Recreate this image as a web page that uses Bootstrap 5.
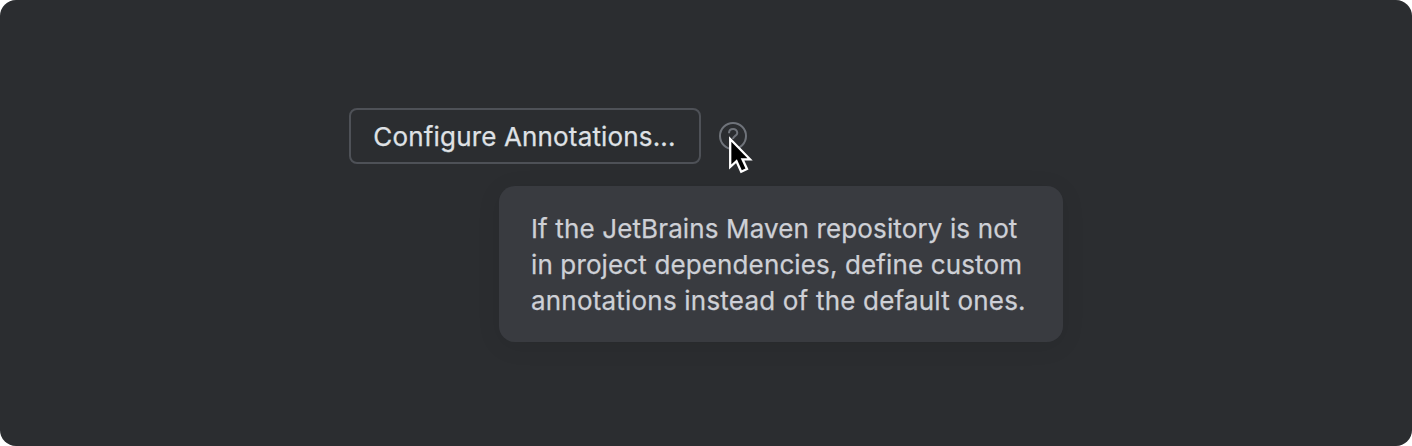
<!DOCTYPE html>
<html lang="en">
<head>
<meta charset="utf-8">
<meta name="viewport" content="width=device-width, initial-scale=1">
<title>Configure Annotations</title>
<link href="https://cdn.jsdelivr.net/npm/bootstrap@5.3.0/dist/css/bootstrap.min.css" rel="stylesheet">
<style>
body{background:#fff;font-family:Inter,sans-serif;font-size:26px}
.stage{height:446px;background:#2b2d30;border-radius:16px;padding:108px 0 0 349px}
.action-btn,.action-btn:hover{width:352px;height:56px;border:2px solid #4e5157;border-radius:8px;color:#dfe1e5;font-size:26px;line-height:36px;padding:2px 1px 0 0;background:transparent;letter-spacing:.16px;-webkit-text-stroke:.25px}
.help{width:28px;height:28px;margin-left:18px}
.hint{top:78px;left:150px;width:564px;height:156px;padding:25px 32px 23px;border-radius:16px;background:#393b40;color:#ced0d6;line-height:36px;letter-spacing:.13px;box-shadow:0 4px 24px rgba(0,0,0,.08);-webkit-text-stroke:.25px}
.hint span:last-child{letter-spacing:.2px}
.pointer{left:8px;top:13px;z-index:2}
</style>
</head>
<body>
<main class="stage overflow-hidden">
<div class="position-relative d-flex align-items-center">
<button class="btn action-btn" type="button">Configure Annotations...</button>
<div class="help position-relative">
<svg class="d-block" width="28" height="28" viewBox="0 0 28 28" fill="none" stroke="#6f737a" stroke-width="2"><circle cx="14" cy="14" r="13"/><path d="M10 11.200C10 5.600 18.300 5.600 18.300 11C18.300 14 14 13.700 14 17"/><circle cx="14" cy="20" r="1.200" fill="#6f737a" stroke="none"/></svg>
<svg class="pointer position-absolute" width="26" height="42" viewBox="0 0 26 42"><path d="M3.200 4V32L9.500 26.200L14.200 36.700L20 34L15.500 24.300H23Z" fill="#000" stroke="#fff" stroke-width="2.300"/></svg>
</div>
<div class="hint position-absolute text-nowrap" role="tooltip"><span class="d-block">If the JetBrains Maven repository is not</span><span class="d-block">in project dependencies, define custom</span><span class="d-block">annotations instead of the default ones.</span></div>
</div>
</main>
<script src="https://cdn.jsdelivr.net/npm/bootstrap@5.3.0/dist/js/bootstrap.bundle.min.js"></script>
</body>
</html>
